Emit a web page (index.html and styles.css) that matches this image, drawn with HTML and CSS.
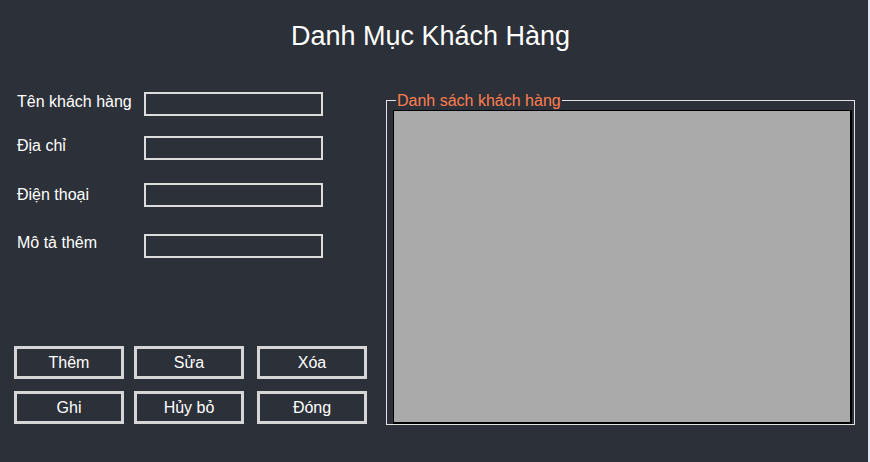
FILE: index.html
```html
<!DOCTYPE html>
<html lang="vi">
<head>
<meta charset="utf-8">
<title>Danh Mục Khách Hàng</title>
<link rel="stylesheet" href="styles.css">
</head>
<body>
<div class="window">
  <h1 class="title">Danh Mục Khách Hàng</h1>
  <div class="main">
    <div class="left">
      <div class="form">
        <div class="row row-1"><label class="label">Tên khách hàng</label><input class="input" type="text"></div>
        <div class="row row-2"><label class="label">Địa chỉ</label><input class="input" type="text"></div>
        <div class="row row-3"><label class="label">Điện thoại</label><input class="input" type="text"></div>
        <div class="row row-4"><label class="label">Mô tả thêm</label><input class="input" type="text"></div>
      </div>
      <div class="buttons">
        <button class="btn">Thêm</button>
        <button class="btn">Sửa</button>
        <button class="btn">Xóa</button>
        <button class="btn">Ghi</button>
        <button class="btn">Hủy bỏ</button>
        <button class="btn">Đóng</button>
      </div>
    </div>
    <fieldset class="group">
      <legend class="group-title">Danh sách khách hàng</legend>
      <div class="list"></div>
    </fieldset>
  </div>
</div>
</body>
</html>
```

FILE: styles.css
```css
html, body {
  margin: 0;
  padding: 0;
}
body {
  background: #dae6f4;
  width: 870px;
  height: 462px;
  overflow: hidden;
}
.window {
  width: 868px;
  height: 462px;
  background: #2c3038;
  font-family: "Liberation Sans", Arial, sans-serif;
  color: #ffffff;
}
.title {
  margin: 0;
  padding: 21px 7px 0 0;
  font-size: 27px;
  line-height: 31px;
  font-weight: normal;
  text-align: center;
}
.main {
  display: flex;
  margin-top: 40px;
}
.left {
  width: 386px;
  box-sizing: border-box;
  padding-left: 14px;
}
.form {
  padding-left: 3px;
}
.row {
  display: flex;
  align-items: flex-start;
}
.row-2 { margin-top: 20px; }
.row-3 { margin-top: 23px; }
.row-4 { margin-top: 27px; }
.label {
  width: 127px;
  font-size: 16px;
  line-height: 18px;
  padding-top: 1px;
}
.row-3 .label { padding-top: 3px; }
.row-4 .label { padding-top: 0; }
.input {
  width: 179px;
  height: 24px;
  box-sizing: border-box;
  margin: 0;
  border: 2px solid #dcdcdc;
  background: transparent;
  color: #fff;
  padding: 0 3px;
  font: inherit;
  font-size: 15px;
}
.buttons {
  display: grid;
  grid-template-columns: 120px 123px 110px;
  grid-auto-rows: 33px;
  row-gap: 12px;
  margin-top: 88px;
}
.btn {
  width: 110px;
  margin: 0;
  padding: 0;
  box-sizing: border-box;
  border: 3px solid #d6d6d6;
  background: #2c3038;
  color: #ffffff;
  font-family: "Liberation Sans", Arial, sans-serif;
  font-size: 16px;
  line-height: 18px;
}
.group {
  margin: 0;
  width: 469px;
  box-sizing: border-box;
  border: 1px solid #e2e2e2;
  padding: 0 2px 0 6px;
}
.group-title {
  color: #ff7f50;
  font-size: 16px;
  line-height: 17px;
  padding: 0 1px;
  margin-left: 3px;
}
.list {
  width: 459px;
  height: 314px;
  box-sizing: border-box;
  background: #aaaaaa;
  border: 2px solid #000000;
  border-top-width: 1px;
  border-left-width: 1px;
  margin-top: 1px;
}
```
